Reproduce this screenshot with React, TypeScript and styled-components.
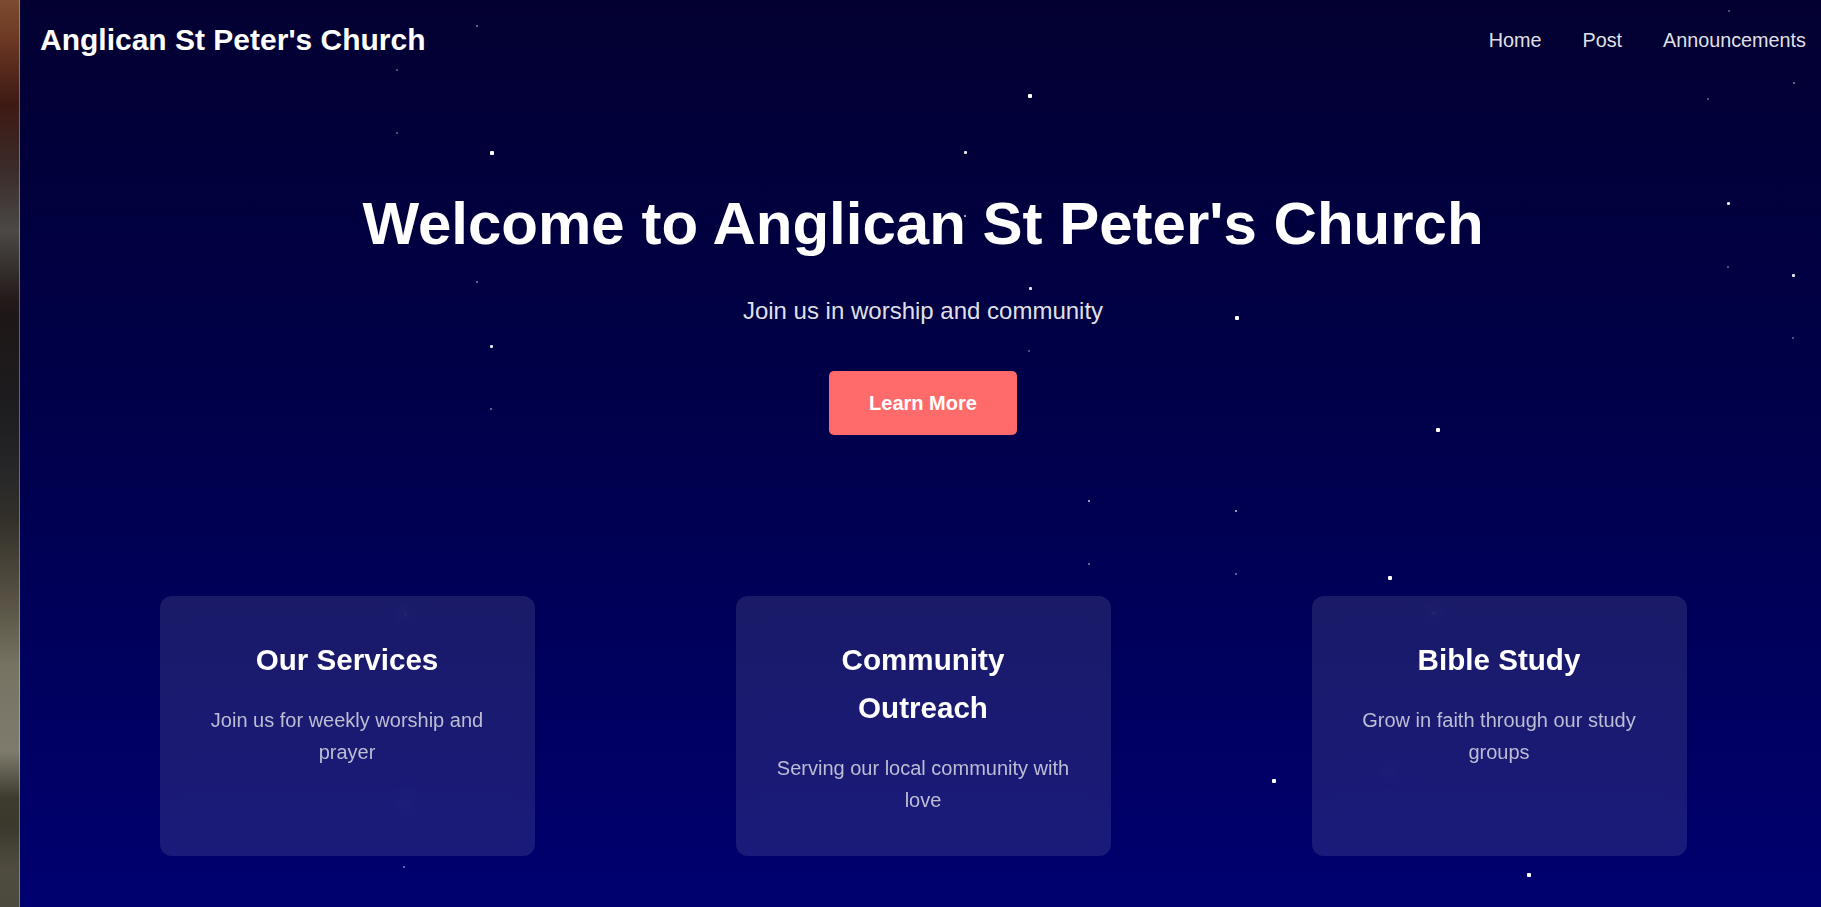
import React from "react";
import styled, { createGlobalStyle } from "styled-components";

const GlobalStyle = createGlobalStyle`
  html, body {
    margin: 0;
    padding: 0;
    background: #000040;
  }
  body {
    font-family: "Liberation Sans", Arial, sans-serif;
    line-height: 1.6;
    color: #ffffff;
  }
  * { box-sizing: border-box; }
`;

const Page = styled.div`
  display: flex;
  min-height: 100vh;
`;

const PhotoStrip = styled.div`
  flex: 0 0 20px;
  position: relative;
  background: linear-gradient(
    to bottom,
    #7c4b30 0px,
    #6e3a24 35px,
    #3e1913 104px,
    #3a2c2a 170px,
    #4b4845 231px,
    #231a1a 300px,
    #1e1717 318px,
    #1d1c1e 405px,
    #252528 463px,
    #33302a 520px,
    #5a5546 607px,
    #777363 665px,
    #7e7b6d 752px,
    #3d3b2e 798px,
    #3b392d 827px,
    #4f4b3f 868px,
    #4c493e 907px
  );
  box-shadow: inset -1px 0 0 rgba(255, 235, 210, 0.35);
`;

const Main = styled.main`
  flex: 1;
  position: relative;
  overflow: hidden;
  min-height: 100vh;
  background: linear-gradient(to bottom, #030031 0%, #00004a 45%, #000070 100%);
`;

const StarField = styled.div`
  position: absolute;
  inset: 0;
  pointer-events: none;
  z-index: 0;
`;

const Star = styled.span<{ $size: number; $alpha: number }>`
  position: absolute;
  width: ${(p) => p.$size}px;
  height: ${(p) => p.$size}px;
  border-radius: 1px;
  background: #ffffff;
  opacity: ${(p) => p.$alpha};
`;

const Header = styled.header`
  position: relative;
  z-index: 1;
  display: flex;
  align-items: center;
  justify-content: space-between;
  padding: 16px 15px 16px 20px;
`;

const Brand = styled.h1`
  margin: 0;
  font-size: 30px;
  line-height: 48px;
  font-weight: 700;
  color: #ffffff;
`;

const Nav = styled.nav`
  display: flex;
  align-items: center;
  gap: 41px;
`;

const NavLink = styled.a`
  font-size: 19.8px;
  line-height: 32px;
  color: rgba(255, 255, 255, 0.9);
  text-decoration: none;
`;

const Hero = styled.section`
  position: relative;
  z-index: 1;
  display: flex;
  flex-direction: column;
  align-items: center;
  text-align: center;
  padding: 96px 0 0 5px;
`;

const HeroTitle = styled.h2`
  margin: 0 0 20px;
  font-size: 60px;
  line-height: 96px;
  font-weight: 700;
  color: #ffffff;
`;

const HeroSubtitle = styled.p`
  margin: 0 0 41px;
  font-size: 24px;
  line-height: 38.4px;
  color: rgba(255, 255, 255, 0.9);
`;

const PrimaryButton = styled.button`
  border: none;
  border-radius: 5px;
  padding: 20px 40px;
  background: #ff6b6b;
  color: #ffffff;
  font-family: inherit;
  font-size: 20px;
  line-height: 24px;
  font-weight: 700;
  cursor: pointer;
`;

const Features = styled.section`
  position: relative;
  z-index: 1;
  display: grid;
  grid-template-columns: repeat(3, 375px);
  column-gap: 201px;
  justify-content: center;
  margin-top: 161px;
  padding-left: 5px;
`;

const Card = styled.article`
  padding: 40px;
  border-radius: 12px;
  background: rgba(255, 255, 255, 0.1);
  backdrop-filter: blur(10px);
  text-align: center;
`;

const CardTitle = styled.h3`
  margin: 0 0 20.6px;
  font-size: 29.6px;
  line-height: 1.6;
  font-weight: 700;
  color: #ffffff;
`;

const CardText = styled.p`
  margin: 0;
  font-size: 20px;
  line-height: 32px;
  color: #bdbdd4;
`;

type StarSpec = [number, number, number, number];

const stars: StarSpec[] = [
  [477, 26, 2.5, 0.5],
  [397, 70, 2, 0.4],
  [397, 133, 2, 0.4],
  [492, 153, 3.5, 1],
  [477, 282, 2, 0.5],
  [491, 346, 3, 0.9],
  [491, 409, 2, 0.5],
  [1729, 11, 2.5, 0.4],
  [1030, 96, 3.5, 1],
  [1794, 83, 2.5, 0.5],
  [1708, 99, 2, 0.4],
  [965, 152, 3, 0.9],
  [1728, 203, 3, 0.9],
  [1728, 267, 2, 0.4],
  [1793, 275, 3, 0.9],
  [1793, 338, 2, 0.4],
  [1030, 288, 3, 0.9],
  [1237, 318, 3.5, 1],
  [1029, 351, 2, 0.4],
  [1438, 430, 3.5, 1],
  [965, 216, 2.5, 0.8],
  [1089, 307, 2.5, 0.8],
  [1089, 501, 2.5, 0.8],
  [1236, 511, 2.5, 0.8],
  [1089, 564, 2, 0.5],
  [1236, 574, 2, 0.5],
  [1390, 578, 3.5, 1],
  [1274, 781, 3.5, 1],
  [404, 867, 2, 0.5],
  [1529, 875, 3.5, 1],
  [405, 614, 3, 0.9],
  [405, 803, 3, 0.9],
  [1433, 613, 3, 0.9],
  [1390, 770, 3, 0.9],
];

const features = [
  { title: "Our Services", text: "Join us for weekly worship and prayer" },
  { title: "Community Outreach", text: "Serving our local community with love" },
  { title: "Bible Study", text: "Grow in faith through our study groups" },
];

export default function App() {
  return (
    <>
      <GlobalStyle />
      <Page>
        <PhotoStrip />
        <Main>
          <StarField>
            {stars.map(([x, y, s, a], i) => (
              <Star
                key={i}
                $size={s}
                $alpha={a}
                style={{ left: x - 20 - s / 2, top: y - s / 2 }}
              />
            ))}
          </StarField>
          <Header>
            <Brand>Anglican St Peter's Church</Brand>
            <Nav>
              <NavLink href="#">Home</NavLink>
              <NavLink href="#">Post</NavLink>
              <NavLink href="#">Announcements</NavLink>
            </Nav>
          </Header>
          <Hero>
            <HeroTitle>Welcome to Anglican St Peter's Church</HeroTitle>
            <HeroSubtitle>Join us in worship and community</HeroSubtitle>
            <PrimaryButton>Learn More</PrimaryButton>
          </Hero>
          <Features>
            {features.map((f) => (
              <Card key={f.title}>
                <CardTitle>{f.title}</CardTitle>
                <CardText>{f.text}</CardText>
              </Card>
            ))}
          </Features>
        </Main>
      </Page>
    </>
  );
}
